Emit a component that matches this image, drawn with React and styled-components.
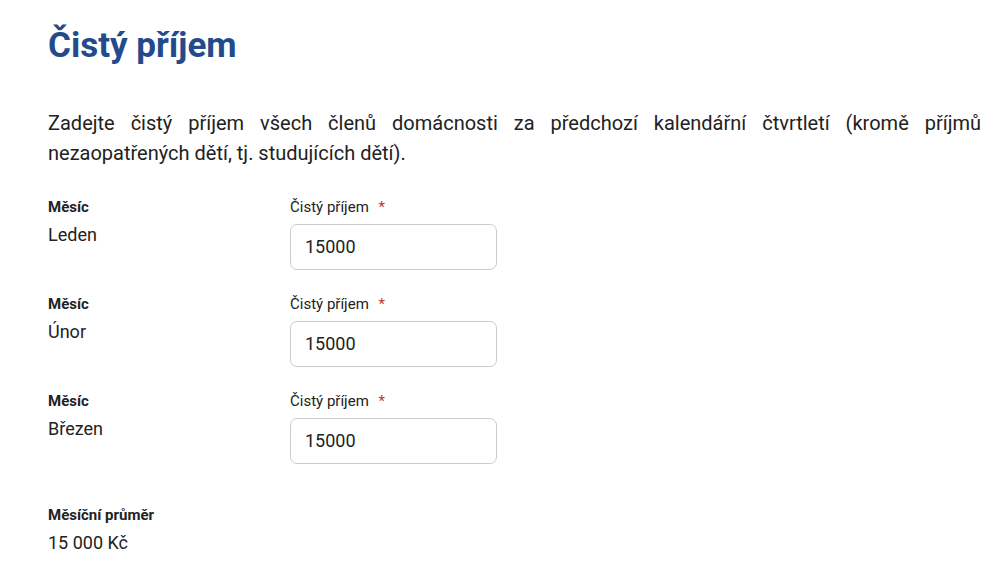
import React from 'react';
import styled, { createGlobalStyle } from 'styled-components';

const GlobalStyle = createGlobalStyle`
  body {
    margin: 0;
    background: #fff;
    font-family: Roboto, "Liberation Sans", sans-serif;
    color: #212121;
  }
`;

const months = ['Leden', 'Únor', 'Březen'];

function App() {
  return (
    <>
      <GlobalStyle />
      <Page>
        <Title>Čistý příjem</Title>
        <Intro>
          Zadejte čistý příjem všech členů domácnosti za předchozí kalendářní
          čtvrtletí (kromě příjmů nezaopatřených dětí, tj. studujících dětí).
        </Intro>
        <Rows>
          {months.map((m) => (
            <Row key={m}>
              <div>
                <FieldLabel>Měsíc</FieldLabel>
                <FieldValue>{m}</FieldValue>
              </div>
              <div>
                <InputLabel>
                  Čistý příjem <Required>*</Required>
                </InputLabel>
                <StyledInput type='text' defaultValue='15000' />
              </div>
            </Row>
          ))}
        </Rows>
        <Summary>
          <FieldLabel>Měsíční průměr</FieldLabel>
          <FieldValue>15 000 Kč</FieldValue>
        </Summary>
      </Page>
    </>
  );
}

export default App;

const Page = styled.div`
  padding: 27px 18px 0 48px;
`;

const Title = styled.h1`
  margin: 0;
  font-size: 35px;
  line-height: 38px;
  font-weight: 700;
  color: #234b8c;
`;

const Intro = styled.p`
  margin: 43px 0 0;
  font-size: 20px;
  line-height: 30px;
  text-align: justify;
  color: #222;
`;

const Rows = styled.div`
  margin-top: 29px;
  display: flex;
  flex-direction: column;
  gap: 24px;
`;

const Row = styled.div`
  display: grid;
  grid-template-columns: 242px 1fr;
`;

const FieldLabel = styled.div`
  font-size: 15px;
  line-height: 20px;
  font-weight: 700;
  color: #222;
`;

const FieldValue = styled.div`
  margin-top: 4px;
  font-size: 18px;
  line-height: 28px;
  color: #222;
`;

const InputLabel = styled.label`
  display: block;
  font-size: 15px;
  line-height: 20px;
  color: #222;
`;

const Required = styled.span`
  color: #c0392b;
  margin-left: 6px;
`;

const StyledInput = styled.input`
  display: block;
  margin-top: 7px;
  box-sizing: border-box;
  width: 207px;
  height: 46px;
  padding: 0 14px 2px;
  border: 1px solid #c9ccd3;
  border-radius: 7px;
  font-family: Roboto, "Liberation Sans", sans-serif;
  font-size: 18px;
  color: #222;
  outline: none;
`;

const Summary = styled.div`
  margin-top: 41px;
`;
